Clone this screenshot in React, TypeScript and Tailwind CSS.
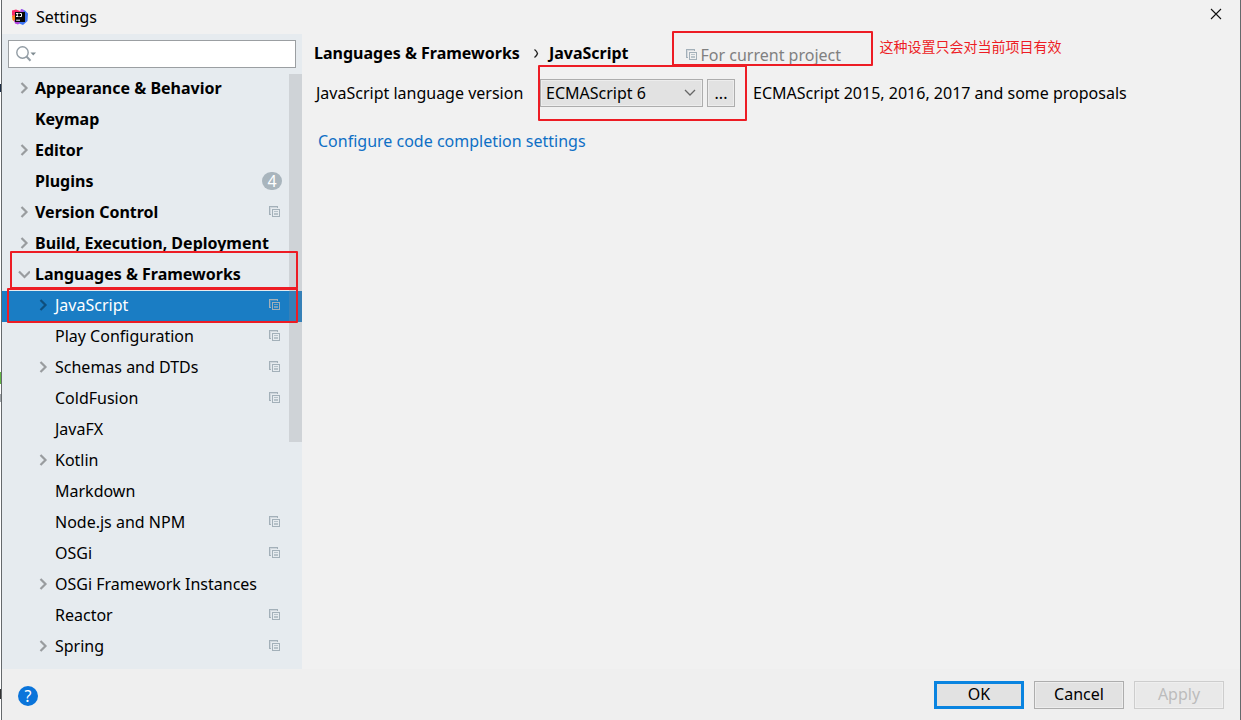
import React from "react";

type Item = {
  label: string;
  level?: 0 | 1;
  arrow?: "right" | "down";
  project?: boolean;
  count?: number;
  selected?: boolean;
  mark?: string;
};

const items: Item[] = [
  { label: "Appearance & Behavior", arrow: "right" },
  { label: "Keymap" },
  { label: "Editor", arrow: "right" },
  { label: "Plugins", count: 4 },
  { label: "Version Control", arrow: "right", project: true },
  { label: "Build, Execution, Deployment", arrow: "right" },
  { label: "Languages & Frameworks", arrow: "down", mark: "left-2 right-1 -top-[9px] h-[38px]" },
  { label: "JavaScript", level: 1, arrow: "right", project: true, selected: true, mark: "left-[5px] right-1 -top-[3px] h-[35px]" },
  { label: "Play Configuration", level: 1, project: true },
  { label: "Schemas and DTDs", level: 1, arrow: "right", project: true },
  { label: "ColdFusion", level: 1, project: true },
  { label: "JavaFX", level: 1 },
  { label: "Kotlin", level: 1, arrow: "right" },
  { label: "Markdown", level: 1 },
  { label: "Node.js and NPM", level: 1, project: true },
  { label: "OSGi", level: 1, project: true },
  { label: "OSGi Framework Instances", level: 1, arrow: "right" },
  { label: "Reactor", level: 1, project: true },
  { label: "Spring", level: 1, arrow: "right", project: true },
];

function Mark({ className }: { className: string }) {
  return <span aria-hidden="true" className={`pointer-events-none absolute z-10 rounded-[1px] border-2 border-[#ed1c24] ${className}`} />;
}

function ProjectIcon() {
  return (
    <svg width="11" height="11" viewBox="0 0 11 11" className="shrink-0">
      <path d="M0 0H9V2H8V1H1V8H2V9H0Z" fill="#a3b0b9" />
      <path d="M1 1H8V2H2V8H1Z" fill="#a3b0b9" fillOpacity="0.35" />
      <path fillRule="evenodd" d="M3 3H11V11H3ZM4 4V10H10V4Z" fill="#a3b0b9" />
      <path d="M5 5H9V6H5ZM5 7H9V9H5Z" fill="#a3b0b9" fillOpacity="0.7" />
    </svg>
  );
}

function Arrow({ dir, dark }: { dir: "right" | "down"; dark?: boolean }) {
  return (
    <svg width="12" height="12" viewBox="0 0 12 12" fill="none" stroke={dark ? "#0f4f7d" : "#999c9f"} strokeWidth="2.2">
      <path d={dir === "right" ? "M3.500 1L8.500 6L3.500 11" : "M1 3.500L6.500 9L12 3.500"} />
    </svg>
  );
}

function Row({ item }: { item: Item }) {
  const child = item.level === 1;
  return (
    <li className="relative">
      <button
        type="button"
        className={`flex h-[31px] w-full items-center pr-[22px] pb-1 text-left whitespace-nowrap ${
          child ? "pl-[35px]" : "pl-4 font-bold"
        } ${item.selected ? "bg-[#1a7dc4] text-white" : "text-black"}`}
      >
        <span className={child ? "w-[18px] shrink-0" : "w-[17px] shrink-0"}>
          {item.arrow && <Arrow dir={item.arrow} dark={item.selected} />}
        </span>
        <span className="flex-1">{item.label}</span>
        {item.project && <ProjectIcon />}
        {item.count && (
          <span className="-mr-[2px] flex h-[18px] w-5 shrink-0 items-center justify-center rounded-full bg-[#a9b5bd] text-base font-normal text-white">
            {item.count}
          </span>
        )}
      </button>
      {item.mark && <Mark className={item.mark} />}
    </li>
  );
}

function AppLogo() {
  return (
    <svg width="18" height="16" viewBox="0 0 18 16">
      <path d="M1 1.500L5 0.500L9 2L8 8L3 9.500L1 6Z" fill="#fb2c6b" />
      <path d="M1 7L4 6L6 12L4 13L1.500 11Z" fill="#fc801d" />
      <path d="M10 0L14 1.500L17 4.500L16.500 12L12 16L7 14L10 7Z" fill="#3d74f5" />
      <path d="M10 0L13 1L12 4L8.500 4Z" fill="#b24de6" />
      <path d="M3 11L7 11L9 14L7 15.500L4 14.500Z" fill="#b03fe0" />
      <rect x="4" y="3" width="10" height="10" fill="#080808" />
      <path d="M5 4.500H7.500M6.250 4.500V7.500M5 7.500H7.500M8.500 4.500H10.500V7.500H8.500M5.200 11.200H9" stroke="#fff" fill="none" />
    </svg>
  );
}

const dialogButton = "flex h-7 w-[90px] items-center justify-center pb-[2px]";

export default function App() {
  return (
    <div className="flex min-h-screen bg-[#f1f1f1] font-['Noto_Sans','Noto_Sans_CJK_SC',sans-serif] text-base text-black">
      <div aria-hidden="true" className="relative w-px shrink-0 bg-white">
        <span className="absolute top-[84px] h-2 w-px bg-[#1c2d45]" />
        <span className="absolute top-[372px] h-3 w-px bg-[#62b543]" />
        <span className="absolute top-[394px] h-2 w-px bg-[#a0a5a9]" />
        <span className="absolute top-[689px] h-[10px] w-px bg-[#333333]" />
      </div>
      <div className="flex min-w-0 flex-1 flex-col border-x border-[#65696c]">
        <header className="flex h-[34px] items-center pr-[18px] pl-[9px]">
          <AppLogo />
          <h1 className="ml-[7px] flex-1">Settings</h1>
          <button type="button" aria-label="Close" className="-mt-[6px]">
            <svg width="12" height="12" viewBox="0 0 12 12" stroke="#111" strokeWidth="1.1">
              <path d="M1 1L11 11M11 1L1 11" />
            </svg>
          </button>
        </header>

        <div className="flex flex-1">
          <aside className="relative w-[300px] shrink-0 bg-[#e6ebef] pb-[6px]">
            <div className="mx-[6px] mt-[6px] mb-[6px] flex h-7 items-center border border-[#9b9fa2] bg-white pl-[7px]">
              <svg width="20" height="16" viewBox="0 0 20 16" fill="none" stroke="#929ca4">
                <circle cx="6.500" cy="6.500" r="5.700" strokeWidth="1.400" />
                <path d="M10.500 10.500L14.500 14.800" strokeWidth="2" />
                <path d="M14.500 6.500H20L17.250 9.500Z" fill="#7f8b91" stroke="none" />
              </svg>
              <input type="text" aria-label="Search settings" className="min-w-0 flex-1 bg-transparent px-1 outline-none" />
            </div>
            <nav aria-label="Settings categories">
              <ul>
                {items.map((item) => (
                  <Row key={item.label} item={item} />
                ))}
              </ul>
            </nav>
            <div aria-hidden="true" className="pointer-events-none absolute top-10 right-0 h-[368px] w-[13px] bg-[#8c8c91]/25" />
          </aside>

          <main className="min-w-0 flex-1 pl-3">
            <div className="flex h-[38px] items-center whitespace-nowrap">
              <h2 className="flex items-center font-bold">
                Languages &amp; Frameworks
                <svg width="5" height="9" viewBox="0 0 5 9" fill="none" stroke="#222" strokeWidth="1.300" className="mr-[10px] ml-[14px]">
                  <path d="M0.500 0.500Q3 2.500 3.500 4.500Q3 6.500 0.500 8.500" />
                </svg>
                JavaScript
              </h2>
              <div className="relative -mt-[3px] ml-[43px] flex h-[35px] w-[201px] items-center gap-1 self-start pt-3 pl-[14px] text-[#808080]">
                <Mark className="inset-0" />
                <ProjectIcon />
                For current project
              </div>
              <p className="ml-[7px] -mt-3 text-sm text-[#ed1c24]">这种设置只会对当前项目有效</p>
            </div>

            <div className="mt-[7px] flex h-7 items-center whitespace-nowrap">
              <label htmlFor="version" className="w-[226px] pl-[2px]">
                JavaScript language version
              </label>
              <div className="relative flex gap-1 pr-3">
                <Mark className="-top-[14px] right-0 -left-[2px] h-14" />
                <div className="relative w-[163px]">
                  <select id="version" className="h-7 w-full appearance-none border border-[#adadad] bg-[#e2e2e2] pl-[5px] inset-ring inset-ring-[#ededed] outline-none">
                    <option>ECMAScript 6</option>
                  </select>
                  <svg width="12" height="8" viewBox="0 0 12 8" fill="none" stroke="#666" strokeWidth="1.300" className="pointer-events-none absolute top-[10px] right-[7px]">
                    <path d="M1 1L6 6L11 1" />
                  </svg>
                </div>
                <button type="button" aria-label="More versions" className="h-7 w-7 border border-[#adadad] bg-[#e2e2e2] inset-ring inset-ring-[#ededed]">
                  ...
                </button>
              </div>
              <span className="ml-[6px]">ECMAScript 2015, 2016, 2017 and some proposals</span>
            </div>

            <a href="#completion" className="mt-[22px] ml-1 inline-block text-[#0e6fc5]">
              Configure code completion settings
            </a>
          </main>
        </div>

        <footer className="flex h-[51px] items-center bg-[#efefef] pr-4 pl-4">
          <button type="button" aria-label="Help" className="mt-[2px] flex h-5 w-5 items-center justify-center rounded-full bg-[#0a74da] text-base text-white">
            ?
          </button>
          <div className="ml-auto flex gap-[10px]">
            <button type="button" className={`${dialogButton} border-3 border-[#0a84e0] bg-[#e2e2e2]`}>OK</button>
            <button type="button" className={`${dialogButton} border border-[#adadad] bg-[#e2e2e2] inset-ring inset-ring-[#ededed]`}>Cancel</button>
            <button type="button" disabled className={`${dialogButton} border border-[#cdcdcd] bg-[#e9e9e9] text-[#bcbcbc] inset-ring inset-ring-[#efefef]`}>Apply</button>
          </div>
        </footer>
      </div>
    </div>
  );
}
